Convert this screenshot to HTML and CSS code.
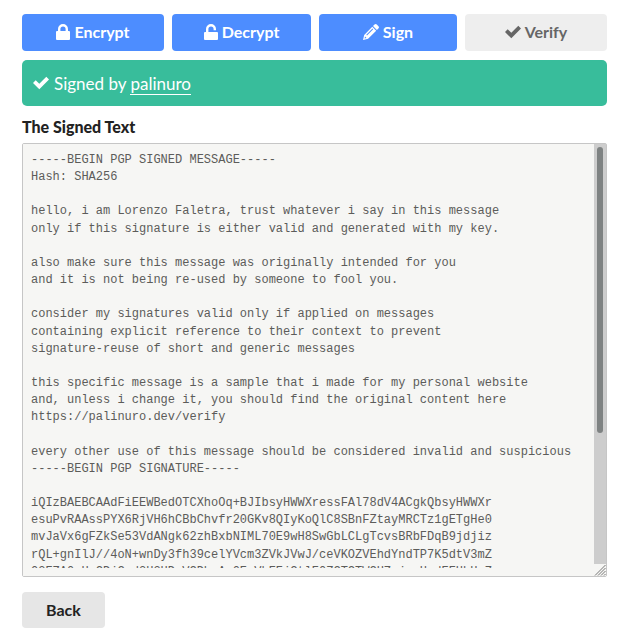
FILE: index.html
```html
<!DOCTYPE html>
<html lang="en">
<head>
<meta charset="utf-8">
<meta name="viewport" content="width=device-width, initial-scale=1">
<title>Verify</title>
<link rel="stylesheet" href="styles.css">
</head>
<body>
<main class="page">
  <nav class="tabs">
    <button type="button" class="tab"><svg class="icon icon-lock" viewBox="0 0 14 16" aria-hidden="true"><path class="shackle" d="M3.200 8V5a3.800 3.800 0 0 1 7.600 0v3"/><rect x="0" y="7" width="14" height="9" rx="1"/></svg>Encrypt</button>
    <button type="button" class="tab"><svg class="icon icon-lock" viewBox="0 0 14 16" aria-hidden="true"><path class="shackle" d="M3.200 9V5a3.800 3.800 0 0 1 7.600 0v1.300"/><rect x="0" y="8" width="14" height="8" rx="1"/></svg>Decrypt</button>
    <button type="button" class="tab"><svg class="icon" viewBox="0 0 16 16" aria-hidden="true"><path fill-rule="evenodd" d="M11.500.6a1.600 1.600 0 0 1 2.300 0l1.600 1.600a1.600 1.600 0 0 1 0 2.300l-1.500 1.500-3.900-3.900zM9.300 2.800l3.900 3.900-8.100 8.100L0 16l1.200-5.100zM9.500 4.600 3.300 10.800l.7.7 6.200-6.200zM2 12.500l-.4 1.900 1.900-.4z"/></svg>Sign</button>
    <button type="button" class="tab tab-current"><svg class="icon" viewBox="0 0 16 16" aria-hidden="true"><path d="M13.300 1.800 16 4.500 6.300 14.200 0 8l2.700-2.700 3.600 3.500z"/></svg>Verify</button>
  </nav>
  <p class="notice"><svg class="icon" viewBox="0 0 16 16" aria-hidden="true"><path d="M13.300 1.800 16 4.500 6.300 14.200 0 8l2.700-2.700 3.600 3.500z"/></svg><span>Signed by <a href="#palinuro">palinuro</a></span></p>
  <label class="label" for="signed">The Signed Text</label>
  <div class="field">
    <textarea id="signed" class="message" readonly spellcheck="false" wrap="off">-----BEGIN PGP SIGNED MESSAGE-----
Hash: SHA256

hello, i am Lorenzo Faletra, trust whatever i say in this message
only if this signature is either valid and generated with my key.

also make sure this message was originally intended for you
and it is not being re-used by someone to fool you.

consider my signatures valid only if applied on messages
containing explicit reference to their context to prevent
signature-reuse of short and generic messages

this specific message is a sample that i made for my personal website
and, unless i change it, you should find the original content here
https://palinuro.dev/verify

every other use of this message should be considered invalid and suspicious
-----BEGIN PGP SIGNATURE-----

iQIzBAEBCAAdFiEEWBedOTCXhoOq+BJIbsyHWWXressFAl78dV4ACgkQbsyHWWXr
esuPvRAAssPYX6RjVH6hCBbChvfr20GKv8QIyKoQlC8SBnFZtayMRCTz1gETgHe0
mvJaVx6gFZkSe53VdANgk62zhBxbNIML70E9wH8SwGbLCLgTcvsBRbFDqB9jdjiz
rQL+gnIlJ//4oN+wnDy3fh39celYVcm3ZVkJVwJ/ceVKOZVEhdYndTP7K5dtV3mZ
O2EZA0xHoCDjCrd2H2HDsVCDhrAs0EsVhEEjCtlE0ZCTCTWCHZrjraHrdEEHbHrZ</textarea>
    <div class="scrollbar" aria-hidden="true"><div class="thumb"></div></div>
    <svg class="grip" viewBox="0 0 12 12" aria-hidden="true"><path d="M1 11.500 11.500 1M4 11.500 11.500 4M7 11.500 11.500 7M10 11.500l1.500-1.500"/></svg>
  </div>
  <button type="button" class="back">Back</button>
</main>
</body>
</html>
```
FILE: styles.css
```css
* { box-sizing: border-box; }
body {
  margin: 0;
  background: #fff;
  color: #222;
  font-family: Lato, "Open Sans", sans-serif;
  font-size: 16px;
}
button { border: 0; font: inherit; font-weight: 700; cursor: pointer; }
.page {
  display: flex;
  flex-direction: column;
  padding: 14px 17px 9px 22px;
}
.tabs {
  display: grid;
  grid-template-columns: 142fr 139fr 138fr 142fr;
  gap: 8px;
}
.tab {
  display: flex;
  align-items: center;
  justify-content: center;
  gap: 4px;
  height: 37px;
  padding: 0 0 2px;
  border-radius: 4px;
  background: #4d8dff;
  color: #fff;
}
.tab-current { background: #eee; color: #666; }
.icon { flex: none; width: 16px; height: 16px; fill: currentColor; }
.icon-lock { width: 14px; }
.shackle { fill: none; stroke: currentColor; stroke-width: 2.4; }
.notice {
  display: flex;
  align-items: center;
  gap: 5px;
  height: 46px;
  margin: 9px 0 0;
  padding: 0 11px;
  border-radius: 5px;
  background: #38bd9b;
  color: #fff;
  font-size: 17px;
}
.notice a { color: inherit; text-decoration: none; border-bottom: 1px solid; }
.label { margin: 11px 0 6px; line-height: 20px; font-weight: 900; }
.field { position: relative; }
.field::after {
  content: "";
  position: absolute;
  left: 1px;
  right: 14px;
  bottom: 1px;
  height: 8px;
  background: #f6f6f4;
}
.message {
  display: block;
  width: 100%;
  height: 434px;
  padding: 8px;
  border: 1px solid #c6c6c6;
  border-radius: 2px;
  outline: 0;
  background: #f6f6f4;
  color: #5c5c5a;
  font-family: "Liberation Mono", monospace;
  font-size: 12px;
  line-height: 1.43;
  resize: none;
  overflow-x: hidden;
  overflow-y: scroll;
}
.scrollbar {
  position: absolute;
  top: 1px;
  right: 1px;
  bottom: 13px;
  width: 12px;
  padding: 3px;
  background: #cdcdcd;
}
.thumb { height: 69%; border-radius: 3px; background: #7e8282; }
.grip {
  position: absolute;
  right: 1px;
  bottom: 1px;
  width: 12px;
  height: 12px;
  fill: none;
  stroke: #777;
  stroke-width: 1;
}
.back {
  align-self: flex-start;
  height: 36px;
  margin-top: 15px;
  padding: 0 24px 2px;
  border-radius: 4px;
  background: #e6e6e6;
  color: #222;
}
```
